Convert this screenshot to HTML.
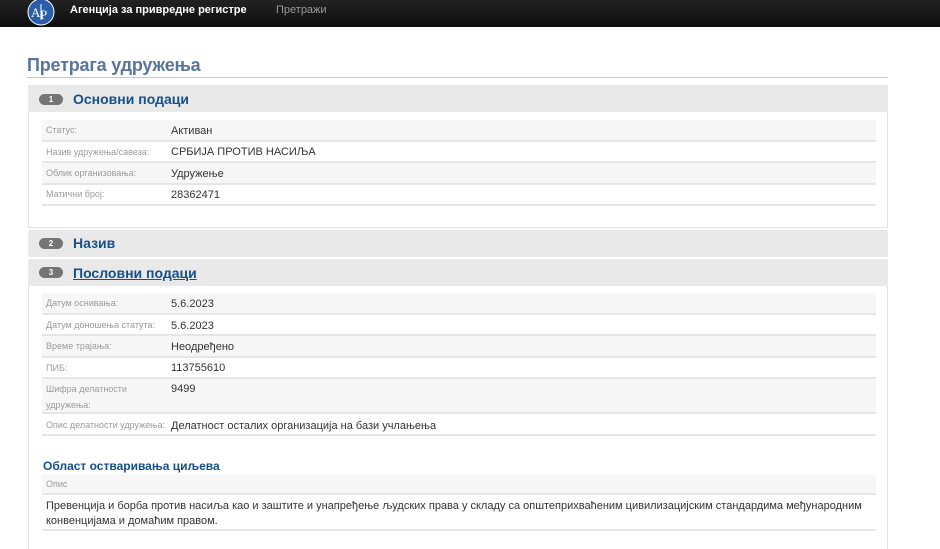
<!DOCTYPE html>
<html><head><meta charset="utf-8"><style>
*{margin:0;padding:0;box-sizing:border-box}
html,body{width:940px;height:549px;overflow:hidden}
body{background:#fff;font-family:"Liberation Sans",Arial,sans-serif;position:relative}
.nav{position:absolute;left:0;top:0;width:940px;height:27px;background:linear-gradient(#222,#0e0e0e)}
.abs{position:absolute}
.h{position:absolute;left:28px;width:860px;background:#e9e9e9;border-radius:2px}
.badge{position:absolute;left:11px;width:24px;height:11px;border-radius:6px;background:#757575;color:#fff;font-size:8px;font-weight:bold;text-align:center;line-height:11px}
.ht{position:absolute;left:45px;font-size:14px;font-weight:bold;color:#15508a}
.body{position:absolute;left:28px;width:860px;border:1px solid #e3e3e3;border-top:none;background:#fff}
.row{position:absolute;left:42px;width:834px;border-bottom:2px solid #e6e6e6}
.row.s{background:#f7f7f7}
.l{position:absolute;left:4px;font-size:9px;color:#9a9a9a;line-height:16px}
.v{position:absolute;left:129px;font-size:11px;color:#333}
</style></head><body>
<div class="nav"></div>
<svg class="abs" style="left:27px;top:0" width="29" height="26" viewBox="0 0 29 26"><circle cx="14" cy="12" r="13" fill="#2a5ea8" stroke="#fff" stroke-width="1"/><text x="4" y="17" font-family="Liberation Serif" font-size="13" fill="#fff">A</text><text x="13" y="19" font-family="Liberation Serif" font-size="13" fill="#fff">Р</text><line x1="14" y1="4" x2="14" y2="20" stroke="#fff"/></svg>
<div class="abs" style="left:70px;top:4px;font-size:11px;font-weight:bold;color:#fff">Агенција за привредне регистре</div>
<div class="abs" style="left:276px;top:4px;font-size:11px;color:#999">Претражи</div>

<div class="abs" style="left:27px;top:55px;font-size:18px;font-weight:bold;color:#5a74a0;letter-spacing:-0.2px">Претрага удружења</div>
<div class="abs" style="left:27px;top:77px;width:861px;height:1px;background:#c8c8c8"></div>

<div class="h" style="top:85px;height:27px"><div class="badge" style="top:9px">1</div><div class="ht" style="top:6px">Основни подаци</div></div>
<div class="body" style="top:112px;height:116px"></div>
<div class="row s" style="top:120px;height:22px"><div class="l" style="top:2px">Статус:</div><div class="v" style="top:5px">Активан</div></div>
<div class="row" style="top:142px;height:21px"><div class="l" style="top:2px">Назив удружења/савеза:</div><div class="v" style="top:4px">СРБИЈА ПРОТИВ НАСИЉА</div></div>
<div class="row s" style="top:163px;height:22px"><div class="l" style="top:2px">Облик организовања:</div><div class="v" style="top:5px">Удружење</div></div>
<div class="row" style="top:185px;height:21px"><div class="l" style="top:1px">Матични број:</div><div class="v" style="top:4px">28362471</div></div>

<div class="h" style="top:230px;height:27px"><div class="badge" style="top:8px">2</div><div class="ht" style="top:5px">Назив</div></div>
<div class="h" style="top:259px;height:27px"><div class="badge" style="top:8px">3</div><div class="ht" style="top:6px;text-decoration:underline">Пословни подаци</div></div>
<div class="body" style="top:286px;height:270px"></div>
<div class="row s" style="top:293px;height:22px"><div class="l" style="top:2px">Датум оснивања:</div><div class="v" style="top:5px">5.6.2023</div></div>
<div class="row" style="top:315px;height:21px"><div class="l" style="top:2px">Датум доношења статута:</div><div class="v" style="top:5px">5.6.2023</div></div>
<div class="row s" style="top:336px;height:22px"><div class="l" style="top:2px">Време трајања:</div><div class="v" style="top:5px">Неодређено</div></div>
<div class="row" style="top:358px;height:21px"><div class="l" style="top:2px">ПИБ:</div><div class="v" style="top:4px">113755610</div></div>
<div class="row s" style="top:379px;height:35px"><div class="l" style="top:2px">Шифра делатности<br>удружења:</div><div class="v" style="top:4px">9499</div></div>
<div class="row" style="top:414px;height:22px"><div class="l" style="top:3px">Опис делатности удружења:</div><div class="v" style="top:6px">Делатност осталих организација на бази учлањења</div></div>
<div class="abs" style="left:43px;top:459px;font-size:12px;font-weight:bold;color:#15508a">Област остваривања циљева</div>
<div class="row s" style="top:475px;height:20px"><div class="l" style="top:1px">Опис</div></div>
<div class="row" style="top:495px;height:36px"><div class="v" style="left:4px;top:4px;line-height:15px">Превенција и борба против насиља као и заштите и унапређење људских права у складу са општеприхваћеним цивилизацијским стандардима међународним<br>конвенцијама и домаћим правом.</div></div>
</body></html>
